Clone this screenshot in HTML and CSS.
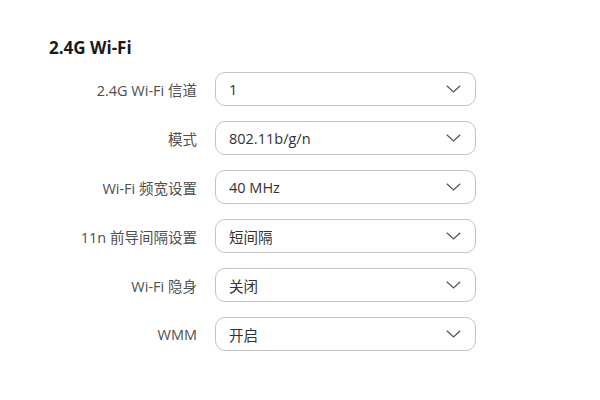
FILE: index.html
```html
<!DOCTYPE html>
<html>
<head>
  <title>2.4G Wi-Fi</title>
  <link rel="stylesheet" href="styles.css">
</head>
<body>
  <div class="panel">
    <h2>2.4G Wi-Fi</h2>

    <div class="form-grid">
      <label>2.4G Wi-Fi 信道</label>
      <div class="select"><span>1</span><svg width="15" height="8" viewBox="0 0 15 8"><polyline points="0.8,0.8 7.5,7 14.2,0.8"/></svg></div>

      <label>模式</label>
      <div class="select"><span>802.11b/g/n</span><svg width="15" height="8" viewBox="0 0 15 8"><polyline points="0.8,0.8 7.5,7 14.2,0.8"/></svg></div>

      <label>Wi-Fi 频宽设置</label>
      <div class="select"><span>40 MHz</span><svg width="15" height="8" viewBox="0 0 15 8"><polyline points="0.8,0.8 7.5,7 14.2,0.8"/></svg></div>

      <label>11n 前导间隔设置</label>
      <div class="select"><span>短间隔</span><svg width="15" height="8" viewBox="0 0 15 8"><polyline points="0.8,0.8 7.5,7 14.2,0.8"/></svg></div>

      <label>Wi-Fi 隐身</label>
      <div class="select"><span>关闭</span><svg width="15" height="8" viewBox="0 0 15 8"><polyline points="0.8,0.8 7.5,7 14.2,0.8"/></svg></div>

      <label>WMM</label>
      <div class="select"><span>开启</span><svg width="15" height="8" viewBox="0 0 15 8"><polyline points="0.8,0.8 7.5,7 14.2,0.8"/></svg></div>
    </div>
  </div>
</body>
</html>
```

FILE: styles.css
```css
body {
  font-family: "Open Sans", "Noto Sans CJK SC", sans-serif;
  background-color: #fff;
  margin: 0;
}

.panel {
  padding: 36px 0 0 50px;
}

h2 {
  font-size: 17px;
  font-weight: 700;
  line-height: 24px;
  color: #1a1a1a;
  margin: 0 0 12px -1px;
}

.form-grid {
  display: grid;
  grid-template-columns: 147px 261px;
  column-gap: 18px;
  row-gap: 15px;
  align-items: center;
}

label {
  text-align: right;
  font-size: 14.5px;
  color: #505050;
}

.select {
  height: 34px;
  box-sizing: border-box;
  border: 1px solid #c4c4c4;
  border-radius: 10px;
  display: flex;
  align-items: center;
  justify-content: space-between;
  padding: 0 14px 0 13px;
  font-size: 14.5px;
  color: #333;
}

.select svg {
  fill: none;
  stroke: #555;
  stroke-width: 1.2;
}
```
